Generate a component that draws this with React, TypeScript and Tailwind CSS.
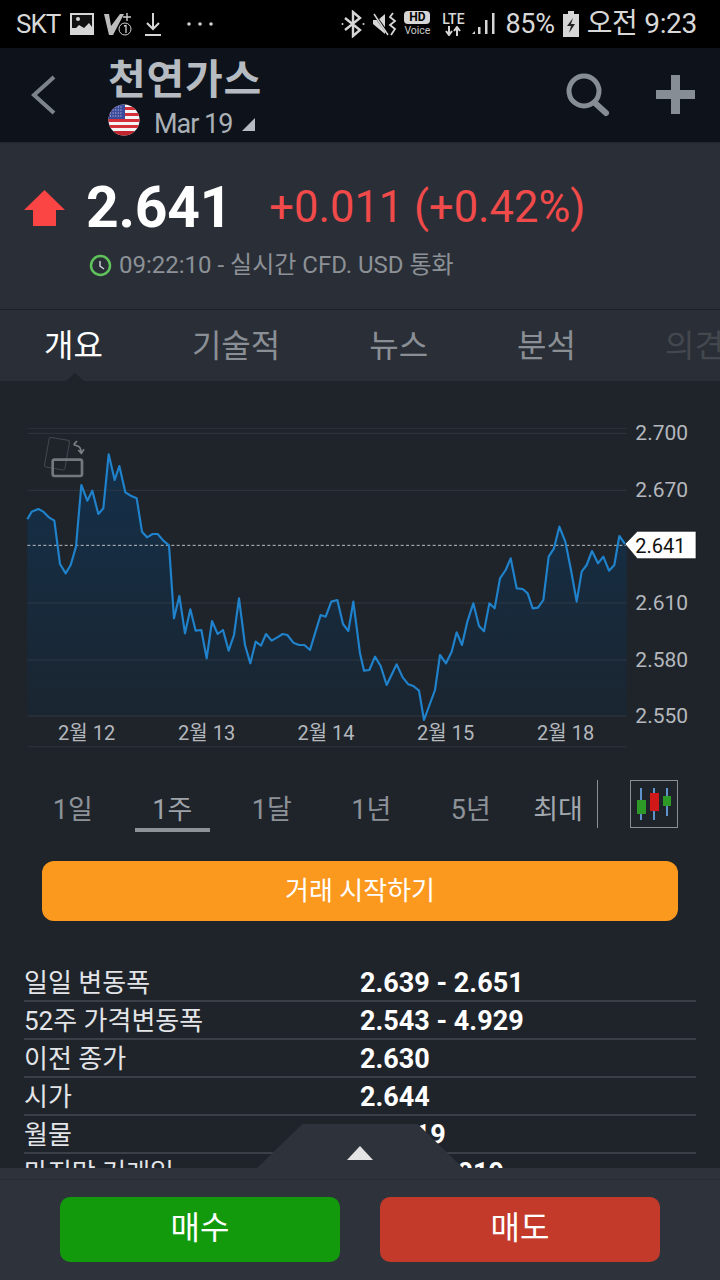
import React from 'react';

// chart points, traced at 3x (x / 3, 420 + y / 3)
const linePoints = [
    [82, 298], [95, 275], [115, 267], [130, 275], [148, 293], [163, 302], [180, 432], [197, 460], [212, 435], [228, 380],
    [244, 195], [262, 242], [277, 212], [295, 282], [310, 265], [326, 103], [344, 180], [358, 138], [376, 217], [392, 227],
    [410, 235], [426, 335], [441, 352], [458, 342], [473, 342], [490, 362], [507, 376], [522, 595], [538, 528], [555, 640],
    [571, 568], [587, 632], [604, 630], [620, 715], [636, 603], [653, 642], [669, 630], [686, 692], [702, 645], [717, 535],
    [735, 675], [751, 730], [767, 665], [783, 677], [798, 642], [815, 662], [832, 652], [848, 642], [862, 645], [880, 668],
    [897, 675], [913, 675], [930, 690], [945, 640], [962, 585], [977, 590], [994, 545], [1012, 540], [1029, 612], [1045, 633],
    [1060, 545], [1080, 700], [1092, 752], [1108, 750], [1125, 710], [1142, 738], [1160, 795], [1190, 733], [1208, 772], [1225, 793],
    [1240, 798], [1257, 812], [1272, 900], [1305, 810], [1320, 705], [1338, 730], [1355, 695], [1370, 637], [1386, 675], [1402, 605],
    [1420, 550], [1437, 618], [1452, 634], [1468, 550], [1484, 565], [1500, 475], [1517, 450], [1532, 415], [1550, 505], [1568, 507],
    [1583, 520], [1598, 565], [1614, 563], [1630, 540], [1646, 410], [1662, 385], [1678, 320], [1696, 365], [1713, 450], [1730, 545],
    [1745, 455], [1760, 435], [1776, 393], [1794, 430], [1810, 410], [1827, 452], [1843, 435], [1858, 348], [1875, 372],
];
const line = linePoints.map(([x, y]) => `${x},${y}`).join(' ');

const priceTicks = [
    {label: '2.700', y: 40},
    {label: '2.670', y: 211},
    {label: '2.610', y: 549},
    {label: '2.580', y: 720},
    {label: '2.550', y: 888},
];
const dateTicks = [
    {label: '2월 12', x: 260},
    {label: '2월 13', x: 620},
    {label: '2월 14', x: 978},
    {label: '2월 15', x: 1337},
    {label: '2월 18', x: 1697},
];
const periods = ['1일', '1주', '1달', '1년', '5년'];
const stats = [
    ['일일 변동폭', '2.639 - 2.651'],
    ['52주 가격변동폭', '2.543 - 4.929'],
    ['이전 종가', '2.630'],
    ['시가', '2.644'],
    ['월물', 'Mar 19'],
    ['마지막 거래일', '02/25/2019'],
];

const StatusIcons = () => (
    <svg width="150" height="30" viewBox="0 0 150 30" fill="none" className="ml-[9px]">
        {/* picture */}
        <rect x="1" y="4" width="24" height="22" fill="#d6d6d6"/>
        <rect x="3" y="6" width="20" height="13" fill="#111"/>
        <circle cx="9" cy="10" r="2" fill="#d6d6d6"/>
        <path d="M3 23 L10 16 L15 19 L20 14 L23 18 V24 H3 Z" fill="#d6d6d6"/>
        {/* missed call / voicemail */}
        <path d="M35 5 H40 L42 17 L51 5 H55 L44 26 H40 Z" fill="#bdbdbd"/>
        <path d="M58 4 V12 M54 8 H62" stroke="#cfcfcf" strokeWidth="1.400"/>
        <circle cx="56" cy="20" r="6" fill="#000" stroke="#cfcfcf" strokeWidth="1"/>
        <path d="M55 17 L57 16.500 V24" stroke="#cfcfcf" strokeWidth="1.300"/>
        {/* download */}
        <path d="M84 4 V20 M78 14 L84 20 L90 14" stroke="#d6d6d6" strokeWidth="2"/>
        <path d="M76 26 H92" stroke="#d6d6d6" strokeWidth="2"/>
        {/* dots */}
        <circle cx="120" cy="15" r="1.800" fill="#cfcfcf"/>
        <circle cx="131" cy="15" r="1.800" fill="#cfcfcf"/>
        <circle cx="142" cy="15" r="1.800" fill="#cfcfcf"/>
    </svg>
);

const Flag = () => (
    <svg width="32" height="32" viewBox="0 0 32 32" className="shrink-0">
        <defs>
            <clipPath id="flag-round"><circle cx="16" cy="16" r="15.500"/></clipPath>
        </defs>
        <g clipPath="url(#flag-round)">
            <rect width="32" height="32" fill="#f4f4f4"/>
            <rect y="3" width="32" height="3" fill="#d5303a"/>
            <rect y="9" width="32" height="3" fill="#d5303a"/>
            <rect y="15" width="32" height="3" fill="#d5303a"/>
            <rect y="21" width="32" height="3" fill="#d5303a"/>
            <rect y="27" width="32" height="5" fill="#c02630"/>
            <rect width="17" height="15" fill="#3b4a9a"/>
            <path d="M2 3h13M2 6h13M2 9h13M2 12h13" stroke="#d5d9ef" strokeWidth="1" strokeDasharray="1 1.600"/>
        </g>
    </svg>
);

const Chart = () => (
    <svg width="720" height="382" viewBox="0 -117 2160 1146" className="block" fontFamily="Roboto, 'Noto Sans CJK KR', sans-serif">
        <defs>
            <linearGradient id="area" x1="0" y1="0" x2="0" y2="1">
                <stop offset="0" stopColor="#14304a"/>
                <stop offset="1" stopColor="#1a2530"/>
            </linearGradient>
        </defs>
        <path d="M82 25 H1880" stroke="#343a42" strokeWidth="2"/>
        <polygon points={`82,888 ${line} 1880,378 1880,888`} fill="url(#area)"/>
        {priceTicks.map((tick) => (
            <path key={tick.label} d={`M82 ${tick.y} H1880`} stroke="#3a4048" strokeWidth="2"/>
        ))}
        <path d="M82 980 H1880" stroke="#343a42" strokeWidth="2"/>
        <path d="M82 376 H1880" stroke="#b8bdc2" strokeWidth="3" strokeDasharray="9 7"/>
        <polyline points={line} fill="none" stroke="#1f82cb" strokeWidth="6.500" strokeLinejoin="round"/>
        {/* rotate hint */}
        <g fill="none">
            <rect x="140" y="56" width="62" height="90" rx="6" strokeWidth="3" stroke="#43484f" transform="rotate(10 171 101)"/>
            <rect x="158" y="119" width="88" height="49" rx="6" strokeWidth="8" stroke="#73787e"/>
            <path d="M221 74 L231 63 M221 74 L233 78 Q243 82 243 96 M235 90 L244 100 L252 88" strokeWidth="5" stroke="#7a7f85"/>
        </g>
        {priceTicks.map((tick) => (
            <text key={tick.label} x="1906" y={tick.y + 21} fontSize="63" fill="#b4b8bd">{tick.label}</text>
        ))}
        {dateTicks.map((tick) => (
            <text key={tick.label} x={tick.x} y="959" textAnchor="middle" fontSize="60" fill="#b4b8bd">{tick.label}</text>
        ))}
        <path d="M1875 372 L1912 334 H2088 V416 H1912 Z" fill="#fff" stroke="#111" strokeWidth="2"/>
        <text x="1906" y="398" fontSize="60" fill="#111">2.641</text>
    </svg>
);

const CandleIcon = () => (
    <svg width="48" height="48" viewBox="0 0 48 48" className="shrink-0">
        <rect x="0.500" y="0.500" width="47" height="47" fill="none" stroke="#8a8f95"/>
        <path d="M11 8 V40 M24 8 V40 M37 8 V36" stroke="#5f93c9" strokeWidth="2"/>
        <rect x="7" y="20" width="9" height="14" fill="#2d9a28"/>
        <rect x="20" y="13" width="9" height="18" fill="#d01818"/>
        <rect x="33" y="16" width="8" height="10" fill="#2d9a28"/>
    </svg>
);

const App = () => {
    return (
        <div className="flex flex-col w-[720px] h-[1280px] overflow-hidden bg-[#1f242b] font-['Roboto','Noto_Sans_CJK_KR',sans-serif]">
            {/* status bar */}
            <div className="flex items-center justify-between h-[48px] shrink-0 bg-black pl-[16px] pr-[23px] text-[#d8d8d8]">
                <div className="flex items-center">
                    <span className="text-[26px] tracking-[-1px]">SKT</span>
                    <StatusIcons/>
                </div>
                <div className="flex items-center">
                    <svg width="24" height="28" viewBox="0 0 24 28" fill="none" stroke="#d6d6d6" strokeWidth="2.400">
                        <path d="M4 8 L19 20 L12 26 V2 L19 8 L4 20"/>
                        <circle cx="1.500" cy="14" r="1" fill="#d6d6d6" stroke="none"/>
                        <circle cx="22.500" cy="14" r="1" fill="#d6d6d6" stroke="none"/>
                    </svg>
                    <svg width="26" height="26" viewBox="0 0 26 26" className="ml-[7px]">
                        <path d="M1 9 H6 L13 3 V23 L1 13 Z" fill="#d6d6d6"/>
                        <path d="M2 3 L17 24" stroke="#000" strokeWidth="2.500"/>
                        <path d="M2 3 L16 24" stroke="#d6d6d6" strokeWidth="1.500"/>
                        <path d="M21 2 L18 6 L23 10 L18 14 L23 18 L19 24" fill="none" stroke="#d6d6d6" strokeWidth="1.800"/>
                    </svg>
                    <div className="flex flex-col items-center w-[28px] ml-[5px] leading-none">
                        <span className="w-[26px] h-[13px] rounded-[4px] bg-[#d6d6d6] text-black text-[12px] leading-[13px] font-bold text-center">HD</span>
                        <span className="text-[10.5px] leading-[13px] text-[#c8c8c8]">Voice</span>
                    </div>
                    <div className="flex flex-col items-center w-[28px] ml-[8px]">
                        <span className="text-[14px] leading-[14px] font-medium">LTE</span>
                        <svg width="16" height="10" viewBox="0 0 16 10" stroke="#d6d6d6" strokeWidth="2" fill="none">
                            <path d="M4 0 V8 M1 5 L4 9 L7 5 M12 10 V2 M9 5 L12 1 L15 5"/>
                        </svg>
                    </div>
                    <svg width="24" height="24" viewBox="0 0 24 24" className="ml-[5px]" fill="#d6d6d6">
                        <path d="M0 22 L3 19 V22 Z"/>
                        <rect x="6" y="15" width="2.500" height="7"/>
                        <rect x="13" y="8" width="2.500" height="14"/>
                        <rect x="20" y="1" width="2.500" height="21"/>
                    </svg>
                    <span className="text-[27px] ml-[9px] tracking-[-0.3px]">85%</span>
                    <svg width="16" height="26" viewBox="0 0 16 26" className="ml-[8px]">
                        <path d="M5 0 H11 V3 H16 V26 H0 V3 H5 Z" fill="#d6d6d6"/>
                        <path d="M10 7 L4 15 H8 L6 22 L12 13 H8 Z" fill="#222"/>
                    </svg>
                    <span className="text-[28px] ml-[8px] tracking-[-0.3px]">오전 9:23</span>
                </div>
            </div>

            {/* header */}
            <div className="flex items-center h-[95px] shrink-0 bg-[#0e131b] border-b border-[#22272e]">
                <svg width="26" height="40" viewBox="0 0 26 40" fill="none" stroke="#7d838a" strokeWidth="4" className="ml-[31px] shrink-0">
                    <path d="M23 2 L3 20 L23 38"/>
                </svg>
                <div className="flex flex-col ml-[51px] flex-1">
                    <span className="text-[41px] leading-[48px] font-bold text-[#b6bbc1] tracking-[0.8px] mt-[1px]">천연가스</span>
                    <div className="flex items-center h-[32px] mt-[0px]">
                        <Flag/>
                        <span className="text-[27px] text-[#aab0b6] ml-[14px] mt-[9px] tracking-[-1px]">Mar 19</span>
                        <div className="ml-[10px] mt-[10px] w-0 h-0 border-l-[13px] border-l-transparent border-b-[13px] border-b-[#b6bbc1]"></div>
                    </div>
                </div>
                <svg width="44" height="44" viewBox="0 0 44 44" fill="none" stroke="#878d95" className="shrink-0 mr-[46px]">
                    <circle cx="18" cy="18" r="15" strokeWidth="5"/>
                    <path d="M29 30 L40 40" strokeWidth="6" strokeLinecap="round"/>
                </svg>
                <svg width="40" height="40" viewBox="0 0 40 40" fill="#878d95" className="shrink-0 mr-[24px]">
                    <rect x="15" y="0" width="9" height="39"/>
                    <rect x="0" y="15" width="39" height="9"/>
                </svg>
            </div>

            {/* quote */}
            <div className="h-[167px] shrink-0 bg-[#2a2e36] border-b border-[#1d2127] pl-[24px] pt-[35px]">
                <div className="flex items-center h-[60px]">
                    <svg width="41" height="36" viewBox="0 0 41 36" fill="#fb4444" className="shrink-0">
                        <path d="M20.500 0 L41 20 H32 V36 H9 V20 H0 Z"/>
                    </svg>
                    <span className="text-[57px] font-bold text-white ml-[21px] tracking-[-0.2px]">2.641</span>
                    <span className="text-[43.5px] text-[#f04a4a] ml-[37px]">+0.011 (+0.42%)</span>
                </div>
                <div className="flex items-center mt-[9px] ml-[65px]">
                    <svg width="23" height="23" viewBox="0 0 23 23" fill="none" stroke="#5fc25a" strokeWidth="2.500">
                        <circle cx="11.500" cy="11.500" r="9.500"/>
                        <path d="M11 7 V12 L15 15" stroke="#c8cdd0" strokeWidth="1.500"/>
                    </svg>
                    <span className="text-[24px] text-[#8c9197] ml-[7px]">09:22:10 - 실시간 CFD. USD 통화</span>
                </div>
            </div>

            {/* tabs */}
            <div className="relative flex items-center h-[71px] shrink-0 gap-[89px] pl-[44px] bg-[#2a2e36] text-[32px] whitespace-nowrap text-[#8a8f95]">
                <span className="text-white">개요</span>
                <span>기술적</span>
                <span>뉴스</span>
                <span>분석</span>
                <span className="text-[#43484f]">의견</span>
                <div className="absolute left-[66px] bottom-0 w-0 h-0 border-x-[9px] border-x-transparent border-b-[8px] border-b-[#1f242b]"></div>
            </div>

            <div className="relative flex-1 min-h-0">
                <div className="h-full overflow-hidden">
                    <Chart/>

                    {/* period selector */}
                    <div className="flex items-start h-[98px] pt-[20px] pl-[23px] text-[27px] text-[#8d9298]">
                        {periods.map((period) => (
                            <span key={period} className={period === '1주'
                                ? 'w-[99.5px] h-[52px] leading-[54px] text-center text-[#9ea3a9] relative'
                                : 'w-[99.5px] h-[52px] leading-[54px] text-center'}>
                                {period}
                                {period === '1주' &&
                                    <span className="absolute left-[12px] bottom-[3px] w-[75px] h-[4px] bg-[#8d9298]"></span>}
                            </span>
                        ))}
                        <span className="w-[75px] h-[52px] leading-[54px] text-center text-[#a3a8ae]">최대</span>
                        <div className="w-[1px] h-[48px] -mt-[3px] bg-[#8a8f95] ml-[1px]"></div>
                        <div className="ml-[32px] -mt-[3px]"><CandleIcon/></div>
                    </div>

                    <div className="flex items-center justify-center h-[60px] mx-[42px] rounded-[12px] bg-[#fb991f] text-white text-[26px]">
                        거래 시작하기
                    </div>

                    {/* stats */}
                    <div className="mt-[43px] mx-[24px] text-[26px] text-[#e3e5e8]">
                        {stats.map(([name, value]) => (
                            <div key={name} className="flex items-center h-[38px] pt-[3px] border-b-2 border-[#3b4048]">
                                <span className="w-[336px] whitespace-nowrap">{name}</span>
                                <span className="font-bold text-white text-[27px]">{value}</span>
                            </div>
                        ))}
                    </div>
                </div>
            </div>

            {/* buy / sell */}
            <div className="relative flex justify-center gap-[40px] h-[112px] shrink-0 pt-[29px] bg-[#2d323b]">
                <div className="absolute left-[257px] -top-[44px] w-[206px] h-[44px] bg-[#2d323b] [clip-path:polygon(0_100%,22%_0,78%_0,100%_100%)]"></div>
                <div className="absolute left-[347px] -top-[22px] w-0 h-0 border-x-[13px] border-x-transparent border-b-[14px] border-b-[#e4e4e4]"></div>
                <div className="absolute left-0 right-0 top-[11px] h-[1px] bg-[#262a32]"></div>
                <div className="flex items-center justify-center w-[280px] h-[65px] pb-[3px] rounded-[10px] bg-[#129a0c] text-white text-[32px]">매수</div>
                <div className="flex items-center justify-center w-[280px] h-[65px] pb-[3px] rounded-[10px] bg-[#c43a2a] text-white text-[32px]">매도</div>
            </div>
        </div>
    );
};

export default App;
